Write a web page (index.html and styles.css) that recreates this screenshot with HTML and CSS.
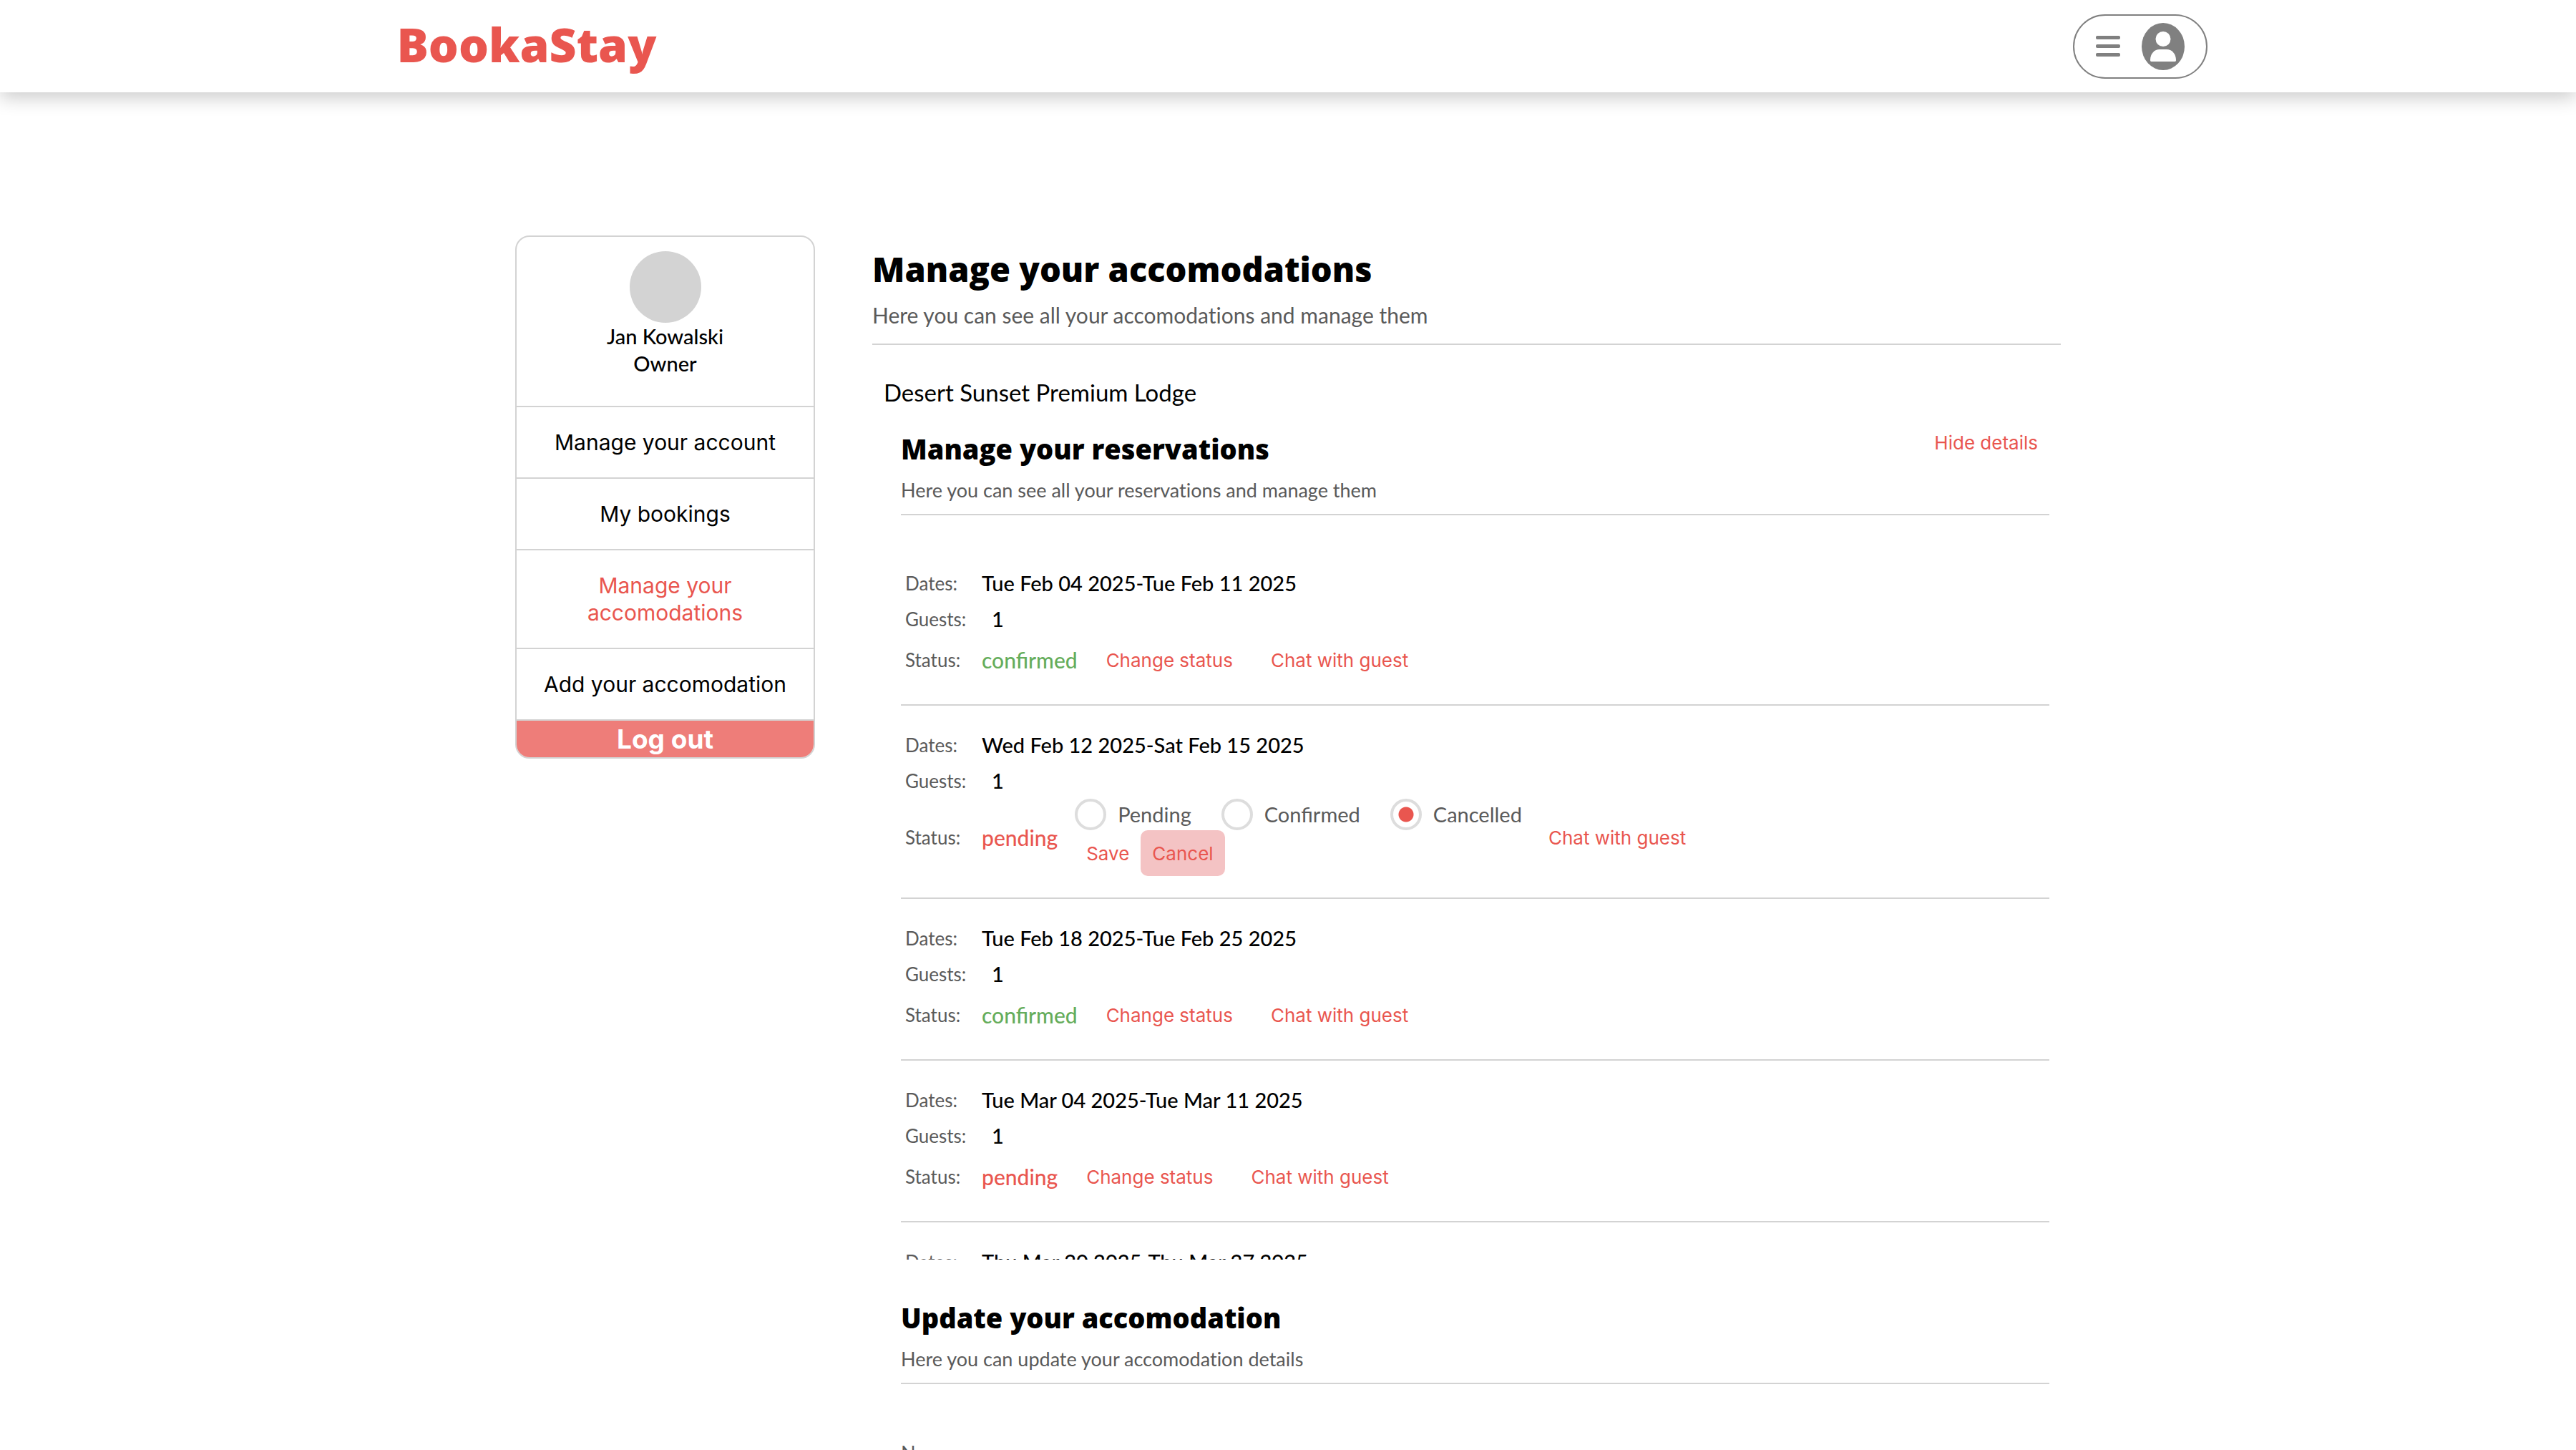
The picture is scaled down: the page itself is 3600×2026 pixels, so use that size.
FILE: index.html
```html
<!DOCTYPE html>
<html lang="en">
<head>
<meta charset="utf-8">
<meta name="viewport" content="width=device-width, initial-scale=1">
<title>BookaStay</title>
<link rel="stylesheet" href="styles.css">
</head>
<body>
<header class="topbar">
  <a class="logo" href="#">BookaStay</a>
  <button class="user-menu" type="button" aria-label="Open user menu">
    <svg width="34" height="30" viewBox="0 0 34 30" fill="#808080" aria-hidden="true">
      <rect width="34" height="5" rx="2"/><rect y="12" width="34" height="5" rx="2"/><rect y="24" width="34" height="5" rx="2"/>
    </svg>
    <svg width="60" height="66" viewBox="0 0 60 66" aria-hidden="true">
      <ellipse cx="30" cy="33" rx="30" ry="33" fill="#808080"/>
      <circle cx="30" cy="22.500" r="10.500" fill="#fff"/>
      <path d="M12 52C12 43 18 37 25 37h10c7 0 13 6 13 15 0 1-.5 2-1.500 2h-33C12.500 54 12 53 12 52z" fill="#fff"/>
    </svg>
  </button>
</header>

<main class="page">
  <aside class="sidebar">
    <div class="profile">
      <div class="avatar"></div>
      <div>Jan Kowalski</div>
      <div>Owner</div>
    </div>
    <nav class="side-nav">
      <button type="button">Manage your account</button>
      <button type="button">My bookings</button>
      <button type="button" class="active">Manage your accomodations</button>
      <button type="button">Add your accomodation</button>
    </nav>
    <button type="button" class="logout">Log out</button>
  </aside>

  <div class="content">
    <div class="content-head">
      <h1>Manage your accomodations</h1>
      <p>Here you can see all your accomodations and manage them</p>
    </div>
    <div class="lodge">Desert Sunset Premium Lodge</div>

    <div class="details">
      <section>
        <div class="section-head">
          <div class="title-row">
            <h2>Manage your reservations</h2>
            <button type="button" class="text-btn">Hide details</button>
          </div>
          <p>Here you can see all your reservations and manage them</p>
        </div>

        <ul class="reservations">
          <li>
            <div class="field"><span class="key">Dates:</span><span class="value">Tue Feb 04 2025-Tue Feb 11 2025</span></div>
            <div class="field"><span class="key">Guests:</span><span class="value count">1</span></div>
            <div class="status"><span class="key">Status:</span><span class="state confirmed">confirmed</span>
              <div class="actions"><button type="button" class="text-btn">Change status</button><button type="button" class="text-btn">Chat with guest</button></div>
            </div>
          </li>
          <li>
            <div class="field"><span class="key">Dates:</span><span class="value">Wed Feb 12 2025-Sat Feb 15 2025</span></div>
            <div class="field"><span class="key">Guests:</span><span class="value count">1</span></div>
            <div class="status"><span class="key">Status:</span><span class="state pending">pending</span>
              <div class="actions">
                <form class="editor">
                  <div class="options">
                    <label><input type="radio" name="status" value="pending">Pending</label>
                    <label><input type="radio" name="status" value="confirmed">Confirmed</label>
                    <label><input type="radio" name="status" value="cancelled" checked>Cancelled</label>
                  </div>
                  <div class="editor-actions"><button type="button" class="text-btn">Save</button><button type="button" class="text-btn hovered">Cancel</button></div>
                </form>
                <button type="button" class="text-btn">Chat with guest</button>
              </div>
            </div>
          </li>
          <li>
            <div class="field"><span class="key">Dates:</span><span class="value">Tue Feb 18 2025-Tue Feb 25 2025</span></div>
            <div class="field"><span class="key">Guests:</span><span class="value count">1</span></div>
            <div class="status"><span class="key">Status:</span><span class="state confirmed">confirmed</span>
              <div class="actions"><button type="button" class="text-btn">Change status</button><button type="button" class="text-btn">Chat with guest</button></div>
            </div>
          </li>
          <li>
            <div class="field"><span class="key">Dates:</span><span class="value">Tue Mar 04 2025-Tue Mar 11 2025</span></div>
            <div class="field"><span class="key">Guests:</span><span class="value count">1</span></div>
            <div class="status"><span class="key">Status:</span><span class="state pending">pending</span>
              <div class="actions"><button type="button" class="text-btn">Change status</button><button type="button" class="text-btn">Chat with guest</button></div>
            </div>
          </li>
          <li>
            <div class="field"><span class="key">Dates:</span><span class="value">Thu Mar 20 2025-Thu Mar 27 2025</span></div>
          </li>
        </ul>
      </section>

      <section>
        <div class="section-head">
          <div class="title-row"><h2>Update your accomodation</h2></div>
          <p>Here you can update your accomodation details</p>
        </div>
        <form class="update-form">
          <label for="name">Name</label>
          <input id="name" type="text" value="Desert Sunset Premium Lodge">
        </form>
      </section>
    </div>
  </div>
</main>
</body>
</html>
```
FILE: styles.css
```css
:root {
  --brand: #e9564f;
  --line: #d3d3d3;
  --muted: #5a5a5a;
  --ui: Inter, "Liberation Sans", sans-serif;
  --display: "Open Sans", "Noto Sans", sans-serif;
}

* { box-sizing: border-box; }

body {
  margin: 0;
  height: 100vh;
  overflow: hidden;
  background: #fff;
  color: #000;
  font-family: Lato, "Open Sans", sans-serif;
  font-size: 29px;
}

h1, h2, p, ul { margin: 0; padding: 0; }
ul { list-style: none; }
p { font-variant-ligatures: no-common-ligatures; }

button {
  border: 0;
  background: none;
  color: inherit;
  font-family: var(--ui);
  cursor: pointer;
}

.topbar {
  display: flex;
  align-items: center;
  justify-content: space-between;
  height: 129px;
  padding: 0 14.3% 0 15.4%;
  box-shadow: 0 8px 24px rgba(0, 0, 0, .2);
}

.logo {
  padding-bottom: 8px;
  color: var(--brand);
  font-family: var(--display);
  font-size: 66px;
  font-weight: 800;
  line-height: 80px;
  text-decoration: none;
}

.user-menu {
  display: flex;
  align-items: center;
  gap: 30px;
  height: 90px;
  padding: 0 30px;
  border: 2px solid #808080;
  border-radius: 45px;
}

.page {
  display: flex;
  align-items: flex-start;
  gap: 80px;
  max-width: 2160px;
  margin: 0 auto;
  padding-top: 200px;
}

.sidebar {
  flex: 0 0 419px;
  overflow: hidden;
  border: 2px solid var(--line);
  border-radius: 20px;
}

.profile {
  padding: 20px 0 40px;
  border-bottom: 2px solid var(--line);
  font-weight: 500;
  line-height: 38px;
  text-align: center;
}

.avatar {
  width: 100px;
  height: 100px;
  margin: 0 auto;
  border-radius: 50%;
  background: var(--line);
}

.side-nav button {
  display: block;
  width: 100%;
  padding: 30px;
  border-bottom: 2px solid var(--line);
  font-size: 30px;
  line-height: 38px;
}

.side-nav .active { color: var(--brand); }

.logout {
  display: block;
  width: 100%;
  height: 51px;
  padding: 0;
  background: #ee7d79;
  color: #fff;
  font-size: 37px;
  font-weight: 700;
}

.content {
  flex: 1;
  min-width: 0;
  padding-top: 18px;
}

.content-head {
  padding-bottom: 22px;
  border-bottom: 2px solid var(--line);
}

h1, h2 {
  font-family: var(--display);
  font-weight: 800;
}

h1 {
  margin-bottom: 17px;
  font-size: 47px;
  line-height: 58px;
}

.content-head p {
  color: var(--muted);
  font-size: 30px;
  line-height: 36px;
}

.lodge {
  margin: 46px 0 18px;
  padding-left: 16px;
  font-size: 33px;
  line-height: 40px;
}

.details { padding: 0 16px 0 40px; }

.section-head {
  padding-bottom: 17px;
  border-bottom: 2px solid var(--line);
}

.title-row {
  display: flex;
  align-items: flex-start;
  justify-content: space-between;
  height: 64px;
  margin-bottom: 19px;
}

h2 {
  padding-top: 17px;
  font-size: 38px;
  line-height: 48px;
}

.section-head p {
  color: var(--muted);
  font-size: 27px;
  line-height: 32px;
}

.text-btn {
  height: 64px;
  padding: 0 16px;
  border-radius: 10px;
  color: var(--brand);
  font-size: 26px;
}

.text-btn.hovered { background: #f4c3c4; }

.reservations {
  height: 1000px;
  margin: 40px 0;
  overflow: hidden;
}

.reservations li {
  padding: 30px 6px;
  border-bottom: 2px solid var(--line);
}

.field, .status, .actions, .options, .options label, .editor-actions {
  display: flex;
  align-items: center;
}

.field { line-height: 50px; }

.key {
  width: 107px;
  color: var(--muted);
  font-size: 26px;
}

.value, .state { font-weight: 500; }
.state { font-size: 30px; }
.count { padding-left: 14px; }
.confirmed { color: #65ad5b; }
.pending { color: var(--brand); }

.actions {
  gap: 21px;
  margin-left: 24px;
}

.options {
  gap: 42px;
  color: var(--muted);
}

.options label {
  gap: 16px;
  line-height: 44px;
}

.options input {
  appearance: none;
  width: 44px;
  height: 44px;
  margin: 0;
  border: 4px solid #ddd;
  border-radius: 50%;
}

.options input:checked {
  background: radial-gradient(circle, var(--brand) 10px, transparent 11px);
}

.update-form {
  display: grid;
  gap: 16px;
  padding-top: 80px;
  color: var(--muted);
  font-size: 27px;
  line-height: 32px;
}

.update-form input {
  height: 64px;
  padding: 0 16px;
  border: 2px solid var(--line);
  border-radius: 10px;
  font: inherit;
}
```
